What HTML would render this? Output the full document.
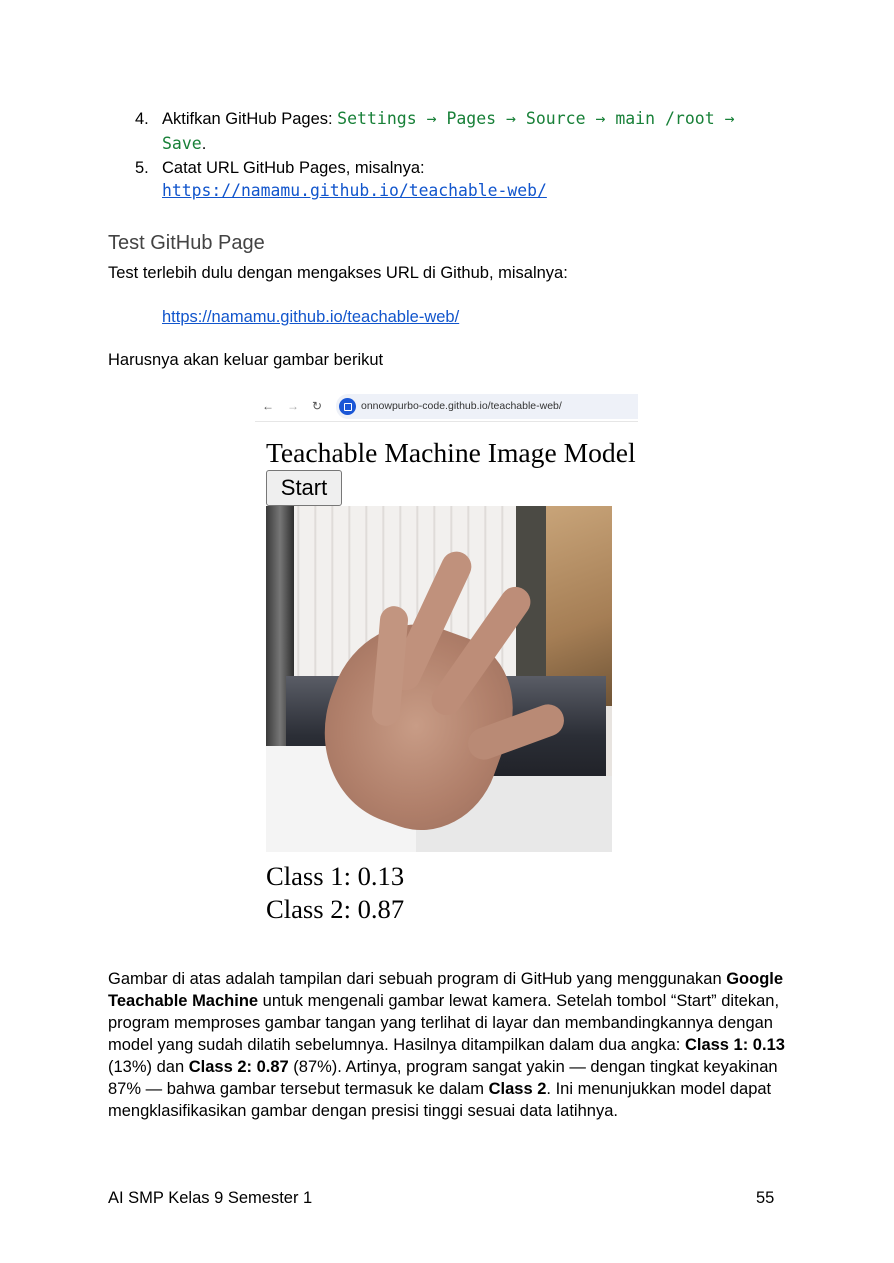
<!DOCTYPE html>
<html><head><meta charset="utf-8"><style>
body{margin:0;background:#fff;width:894px;height:1263px;position:relative;font-family:"Liberation Sans",Arial,sans-serif;color:#000;overflow:hidden}
.a{position:absolute;font-size:16.5px;line-height:22px;white-space:nowrap}
.m{font-family:"DejaVu Sans Mono","Liberation Mono",monospace;color:#188038;font-size:16.5px}
.lk{font-family:"DejaVu Sans Mono","Liberation Mono",monospace;color:#1155cc;text-decoration:underline;font-size:16.4px}
.ser{font-family:"Liberation Serif",serif;position:absolute;white-space:nowrap}
</style></head><body>
<div class="a" style="left:135px;top:108px">4.</div>
<div class="a" style="left:162px;top:108px">Aktifkan GitHub Pages: <span class="m">Settings → Pages → Source → main /root →</span></div>
<div class="a" style="left:162px;top:133px"><span class="m">Save</span>.</div>
<div class="a" style="left:135px;top:157px">5.</div>
<div class="a" style="left:162px;top:157px">Catat URL GitHub Pages, misalnya:</div>
<div class="a" style="left:162px;top:180px"><span class="lk">https://namamu.github.io/teachable-web/</span></div>
<div class="a" style="left:108px;top:231px;font-size:20px;color:#434343;line-height:24px">Test GitHub Page</div>
<div class="a" style="left:108px;top:262px">Test terlebih dulu dengan mengakses URL di Github, misalnya:</div>
<div class="a" style="left:162px;top:306px;color:#1155cc;text-decoration:underline">https://namamu.github.io/teachable-web/</div>
<div class="a" style="left:108px;top:349px">Harusnya akan keluar gambar berikut</div>

<div style="position:absolute;left:255px;top:394px;width:383px;height:27px;background:#fff;border-bottom:1px solid #e6e6e6"></div>
<div style="position:absolute;left:336px;top:394px;width:302px;height:25px;background:#eef1f8;border-radius:12px 0 0 12px"></div>
<div style="position:absolute;left:262px;top:399px;font-size:12px;color:#555">←</div>
<div style="position:absolute;left:287px;top:399px;font-size:12px;color:#aaa">→</div>
<div style="position:absolute;left:312px;top:399px;font-size:12px;color:#555">↻</div>
<div style="position:absolute;left:339px;top:398px;width:17px;height:17px;border-radius:50%;background:#1a56d6"></div>
<div style="position:absolute;left:344px;top:403px;width:6px;height:6px;border:1px solid #fff;border-radius:1px"></div>
<div style="position:absolute;left:361px;top:400px;font-size:10.5px;color:#333;white-space:nowrap">onnowpurbo-code.github.io/teachable-web/</div>

<div class="ser" style="left:266px;top:436px;font-size:27.6px;line-height:34px">Teachable Machine Image Model</div>
<div style="position:absolute;left:266px;top:470px;width:74px;height:34px;border:1px solid #777;border-radius:3px;background:#efefef;font-size:22px;line-height:34px;text-align:center">Start</div>

<div style="position:absolute;left:266px;top:506px;width:346px;height:346px;overflow:hidden;background:#e8e4e0">
 <div style="position:absolute;left:0;top:0;width:346px;height:200px;background:repeating-linear-gradient(90deg,#f2f0ee 0,#f2f0ee 14px,#d9d5d2 15px,#f2f0ee 17px)"></div>
 <div style="position:absolute;left:0;top:0;width:28px;height:346px;background:linear-gradient(90deg,#3a3a3a,#777,#2d2d2d)"></div>
 <div style="position:absolute;left:270px;top:0;width:76px;height:200px;background:linear-gradient(160deg,#c9a57a,#a57e55 60%,#6f5436)"></div>
 <div style="position:absolute;left:250px;top:0;width:30px;height:180px;background:#4b4a44"></div>
 <div style="position:absolute;left:20px;top:170px;width:320px;height:120px;background:linear-gradient(180deg,#5a5d66,#2b2e36 50%,#1c1d22)"></div>
 <div style="position:absolute;left:0;top:240px;width:190px;height:106px;background:#f4f4f4;border-radius:0 60px 0 0"></div>
 <div style="position:absolute;left:150px;top:270px;width:196px;height:76px;background:#e8e8e8"></div>
 <div style="position:absolute;left:60px;top:120px;width:180px;height:200px;background:radial-gradient(ellipse at 50% 50%,#c89c86,#b07f6a 60%,#9b6e5c);border-radius:45% 40% 40% 50%;transform:rotate(20deg)"></div>
 <div style="position:absolute;left:150px;top:40px;width:30px;height:150px;background:#c0917c;border-radius:15px;transform:rotate(25deg)"></div>
 <div style="position:absolute;left:200px;top:70px;width:30px;height:150px;background:#bd8d78;border-radius:15px;transform:rotate(35deg)"></div>
 <div style="position:absolute;left:110px;top:100px;width:28px;height:120px;background:#c29580;border-radius:14px;transform:rotate(5deg)"></div>
 <div style="position:absolute;left:200px;top:210px;width:100px;height:32px;background:#b98a75;border-radius:16px;transform:rotate(-20deg)"></div>
</div>

<div class="ser" style="left:266px;top:860px;font-size:26.6px;line-height:32px">Class 1: 0.13</div>
<div class="ser" style="left:266px;top:893px;font-size:26.6px;line-height:32px">Class 2: 0.87</div>

<div class="a" style="left:108px;top:968px">Gambar di atas adalah tampilan dari sebuah program di GitHub yang menggunakan <b>Google</b></div>
<div class="a" style="left:108px;top:990px"><b>Teachable Machine</b> untuk mengenali gambar lewat kamera. Setelah tombol “Start” ditekan,</div>
<div class="a" style="left:108px;top:1012px">program memproses gambar tangan yang terlihat di layar dan membandingkannya dengan</div>
<div class="a" style="left:108px;top:1034px">model yang sudah dilatih sebelumnya. Hasilnya ditampilkan dalam dua angka: <b>Class 1: 0.13</b></div>
<div class="a" style="left:108px;top:1056px">(13%) dan <b>Class 2: 0.87</b> (87%). Artinya, program sangat yakin — dengan tingkat keyakinan</div>
<div class="a" style="left:108px;top:1078px">87% — bahwa gambar tersebut termasuk ke dalam <b>Class 2</b>. Ini menunjukkan model dapat</div>
<div class="a" style="left:108px;top:1100px">mengklasifikasikan gambar dengan presisi tinggi sesuai data latihnya.</div>

<div class="a" style="left:108px;top:1187px">AI SMP Kelas 9 Semester 1</div>
<div class="a" style="left:756px;top:1187px">55</div>
</body></html>
